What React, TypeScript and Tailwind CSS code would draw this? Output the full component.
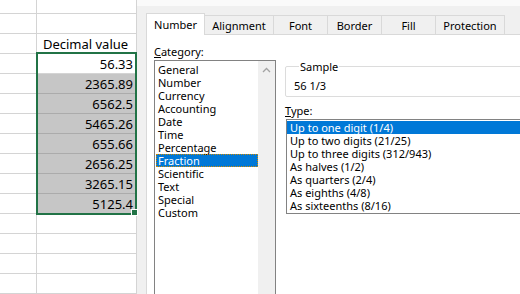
import React from "react";

const values = ["56.33", "2365.89", "6562.5", "5465.26", "655.66", "2656.25", "3265.15", "5125.4"];

const categories = [
  "General",
  "Number",
  "Currency",
  "Accounting",
  "Date",
  "Time",
  "Percentage",
  "Fraction",
  "Scientific",
  "Text",
  "Special",
  "Custom",
];

const types = [
  "Up to one digit (1/4)",
  "Up to two digits (21/25)",
  "Up to three digits (312/943)",
  "As halves (1/2)",
  "As quarters (2/4)",
  "As eighths (4/8)",
  "As sixteenths (8/16)",
];

const tabs = [
  { label: "Number", w: "w-[59px]" },
  { label: "Alignment", w: "w-[69px]" },
  { label: "Font", w: "w-[54px]" },
  { label: "Border", w: "w-[54px]" },
  { label: "Fill", w: "w-[54px]" },
  { label: "Protection", w: "w-[69px]" },
];

function Sheet() {
  // rows: 0 = partial top row, 1 = empty, 2 = header, 3..10 = data, then empty
  const rows: { kind: "empty" | "header" | "data"; value?: string; idx?: number }[] = [
    { kind: "empty" },
    { kind: "empty" },
    { kind: "header" },
    ...values.map((v, i) => ({ kind: "data" as const, value: v, idx: i })),
    { kind: "empty" },
    { kind: "empty" },
    { kind: "empty" },
    { kind: "empty" },
  ];

  return (
    <div className="relative w-[137px] shrink-0 bg-white font-['Noto_Sans',sans-serif] text-[13px] text-black">
      {rows.map((r, i) => {
        const selected = r.kind === "data" && r.idx !== 0;
        return (
          <div key={i} className={`flex ${i === 0 ? "h-[14px]" : "h-[20px]"}`}>
            <div className="w-[37px] border-r border-b border-[#d4d4d4]" />
            <div
              className={`w-[100px] flex items-end border-r border-b pb-[1px] ${
                selected ? "bg-[#c6c6c6] border-[#ababab]" : "border-[#d4d4d4]"
              } ${r.kind === "header" ? "justify-center pr-[2px]" : "justify-end pr-[3px]"}`}
            >
              {r.kind === "header" && <span className="leading-[16px]">Decimal value</span>}
              {r.kind === "data" && <span className="leading-[16px]">{r.value}</span>}
            </div>
          </div>
        );
      })}
      {/* selection outline */}
      <div className="absolute left-[36px] top-[52px] w-[101px] h-[163px] border-2 border-[#217346] pointer-events-none" />
      <div className="absolute left-[131px] top-[209px] w-[7px] h-[7px] bg-[#217346] border border-white" />
    </div>
  );
}

function Dialog() {
  return (
    <div className="flex-1 flex flex-col bg-[#f0f0f0] font-['Noto_Sans',sans-serif] text-[11px] text-black overflow-hidden">
      <div className="h-[6px] bg-[#fafafa] shrink-0" />
      {/* tab strip */}
      <div className="h-[28px] flex items-end pl-[9px] shrink-0">
        {tabs.map((t, i) =>
          i === 0 ? (
            <div
              key={t.label}
              className={`${t.w} h-[22px] -mb-px relative z-10 bg-white border border-b-0 border-[#d9d9d9] flex items-center justify-center leading-[13px]`}
            >
              {t.label}
            </div>
          ) : (
            <div
              key={t.label}
              className={`${t.w} h-[19px] bg-[#f0f0f0] border-t border-r border-[#d9d9d9] flex items-center justify-center leading-[13px] pt-[1px]`}
            >
              {t.label}
            </div>
          )
        )}
      </div>
      {/* tab body */}
      <div className="flex-1 ml-[9px] bg-white border-t border-l border-[#d9d9d9] pl-[7px] pt-[10px] flex">
        <div className="w-[122px] shrink-0 flex flex-col">
          <div className="h-[13px] leading-[13px] mb-[2px]">
            <span className="underline">C</span>ategory:
          </div>
          <div className="h-[260px] border border-[#828282] flex">
            <div className="flex-1 pt-[2px] pl-[1px]">
              {categories.map((c) => (
                <div
                  key={c}
                  className={`h-[13px] leading-[13px] px-[2px] whitespace-nowrap ${
                    c === "Fraction"
                      ? "bg-[#0078d7] text-white outline-1 outline-dotted outline-[#d08a00] -outline-offset-1"
                      : ""
                  }`}
                >
                  {c}
                </div>
              ))}
            </div>
            <div className="w-[17px] bg-[#f0f0f0] flex flex-col items-center pt-[6px]">
              <svg width="9" height="6" viewBox="0 0 9 6">
                <polyline points="1,5 4.5,1.5 8,5" fill="none" stroke="#a3a3a3" strokeWidth="1.3" />
              </svg>
            </div>
          </div>
        </div>
        <div className="w-[260px] shrink-0 ml-[9px] flex flex-col">
          <fieldset className="mt-[15px] border border-[#dcdcdc] rounded-[2px] pl-[8px] pt-[6px] pb-[4px]">
            <legend className="ml-[5px] px-[1px] leading-[13px]">Sample</legend>
            <div className="h-[13px] leading-[13px]">56 1/3</div>
          </fieldset>
          <div className="h-[13px] leading-[13px] mt-[7px] mb-[2px]">
            <span className="underline">T</span>ype:
          </div>
          <div className="ml-[1px] border border-[#828282] py-[1px]">
            {types.map((t, i) => (
              <div
                key={t}
                className={`h-[13px] leading-[13px] px-[3px] whitespace-nowrap ${
                  i === 0 ? "bg-[#0078d7] text-white" : ""
                }`}
              >
                {t}
              </div>
            ))}
          </div>
        </div>
      </div>
    </div>
  );
}

export default function App() {
  return (
    <div className="w-[520px] h-[294px] overflow-hidden flex bg-white">
      <Sheet />
      <Dialog />
    </div>
  );
}
